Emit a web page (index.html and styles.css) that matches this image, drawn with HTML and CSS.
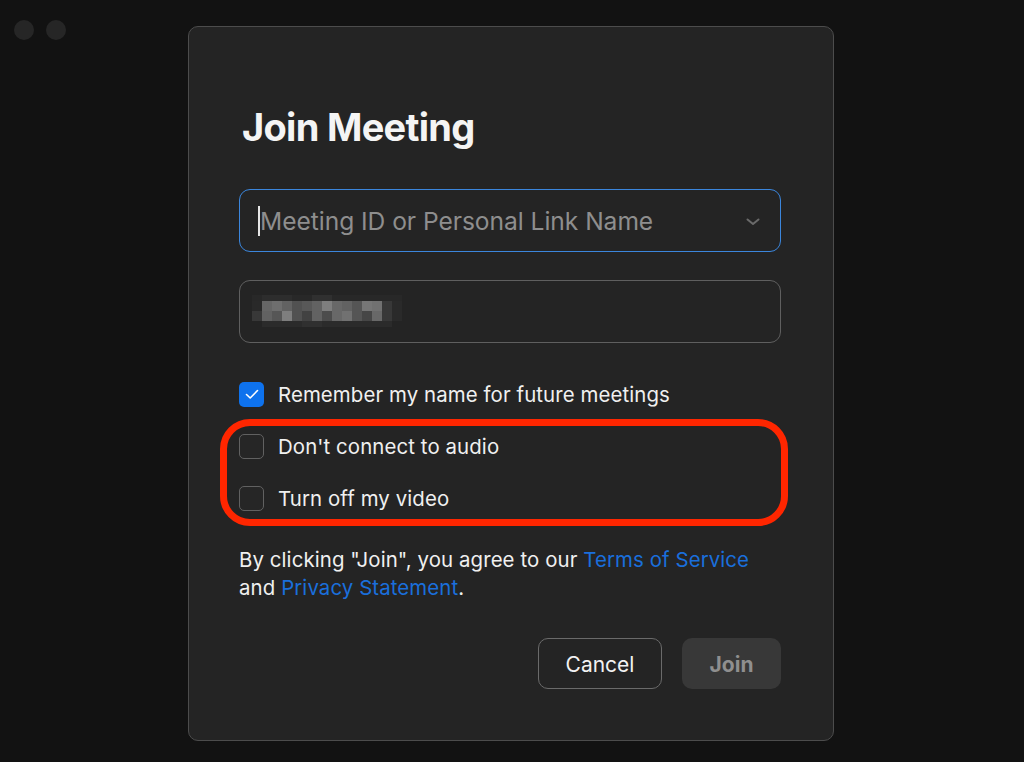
FILE: index.html
```html
<!DOCTYPE html>
<html>
<head>
    <meta charset="utf-8">
    <title>Join Meeting</title>
    <link rel="stylesheet" href="styles.css">
</head>
<body>

<div class="window-dots">
    <span class="dot"></span>
    <span class="dot"></span>
</div>

<div class="dialog">
    <h1 class="title">Join Meeting</h1>

    <div class="field field-focus">
        <span class="caret"></span>
        <span class="placeholder">Meeting ID or Personal Link Name</span>
        <svg class="chevron" width="14" height="8" viewBox="0 0 14 8">
            <path d="M1.5 1.5 L7 6 L12.5 1.5" fill="none" stroke="#6a6a6a" stroke-width="2" stroke-linecap="round" stroke-linejoin="round"/>
        </svg>
    </div>

    <div class="field">
        <!-- pixelated display name -->
        <svg class="blurred" width="160" height="34" viewBox="0 0 160 34">
            <rect x="0" y="0" width="150" height="6" fill="#282828"/>
            <rect x="10" y="0" width="30" height="6" fill="#2d2d2d"/>
            <rect x="60" y="0" width="20" height="6" fill="#303030"/>
            <rect x="0" y="6" width="10" height="10" fill="#292929"/>
            <rect x="10" y="6" width="10" height="10" fill="#666666"/>
            <rect x="20" y="6" width="10" height="10" fill="#6e6e6e"/>
            <rect x="30" y="6" width="10" height="10" fill="#626262"/>
            <rect x="40" y="6" width="10" height="10" fill="#515151"/>
            <rect x="50" y="6" width="10" height="10" fill="#585858"/>
            <rect x="60" y="6" width="10" height="10" fill="#626262"/>
            <rect x="70" y="6" width="10" height="10" fill="#7e7e7e"/>
            <rect x="80" y="6" width="10" height="10" fill="#686868"/>
            <rect x="90" y="6" width="10" height="10" fill="#626262"/>
            <rect x="100" y="6" width="10" height="10" fill="#555555"/>
            <rect x="110" y="6" width="10" height="10" fill="#767676"/>
            <rect x="120" y="6" width="10" height="10" fill="#717171"/>
            <rect x="130" y="6" width="10" height="10" fill="#383838"/>
            <rect x="140" y="6" width="10" height="10" fill="#2a2a2a"/>
            <rect x="0" y="16" width="10" height="10" fill="#383838"/>
            <rect x="10" y="16" width="10" height="10" fill="#626262"/>
            <rect x="20" y="16" width="10" height="10" fill="#565656"/>
            <rect x="30" y="16" width="10" height="10" fill="#7e7e7e"/>
            <rect x="40" y="16" width="10" height="10" fill="#515151"/>
            <rect x="50" y="16" width="10" height="10" fill="#424242"/>
            <rect x="60" y="16" width="10" height="10" fill="#626262"/>
            <rect x="70" y="16" width="10" height="10" fill="#4c4c4c"/>
            <rect x="80" y="16" width="10" height="10" fill="#686868"/>
            <rect x="90" y="16" width="10" height="10" fill="#717171"/>
            <rect x="100" y="16" width="10" height="10" fill="#555555"/>
            <rect x="110" y="16" width="10" height="10" fill="#464646"/>
            <rect x="120" y="16" width="10" height="10" fill="#686868"/>
            <rect x="130" y="16" width="10" height="10" fill="#383838"/>
            <rect x="140" y="16" width="10" height="10" fill="#2a2a2a"/>
            <rect x="10" y="26" width="130" height="6" fill="#2b2b2b"/>
            <rect x="50" y="26" width="20" height="6" fill="#303030"/>
        </svg>
    </div>

    <div class="options">
        <label class="option">
            <span class="box box-checked">
                <svg width="14" height="11" viewBox="0 0 14 11">
                    <path d="M1.5 5.5 L5.2 9 L12.5 1.5" fill="none" stroke="#fff" stroke-width="1.6" stroke-linecap="round" stroke-linejoin="round"/>
                </svg>
            </span>
            Remember my name for future meetings
        </label>
        <div class="option-group">
            <label class="option">
                <span class="box"></span>
                Don't connect to audio
            </label>
            <label class="option">
                <span class="box"></span>
                Turn off my video
            </label>
            <div class="highlight"></div>
        </div>
    </div>

    <p class="terms">
        By clicking "Join", you agree to our <a href="#">Terms of Service</a><br>
        and <a href="#">Privacy Statement</a>.
    </p>

    <div class="actions">
        <button class="btn btn-cancel">Cancel</button>
        <button class="btn btn-join">Join</button>
    </div>
</div>

</body>
</html>
```

FILE: styles.css
```css
BODY {
    margin: 0;
    width: 1024px;
    height: 762px;
    background: #121212;
    font-family: Inter, "Noto Sans", sans-serif;
    color: #f2f2f2;
    position: relative;
    overflow: hidden;
}

.window-dots {
    display: flex;
    gap: 12px;
    padding: 20px 0 0 14px;
}
.dot {
    width: 20px;
    height: 20px;
    border-radius: 50%;
    background: #262626;
}

.dialog {
    position: absolute;
    left: 188px;
    top: 26px;
    width: 646px;
    height: 715px;
    background: #242424;
    border: 1px solid #4c4c4c;
    border-radius: 10px;
    box-sizing: border-box;
    padding: 0 52px 0 50px;
}

.title {
    margin: 77px 0 0 3px;
    font-size: 38px;
    font-weight: 700;
    line-height: 46px;
    letter-spacing: -0.7px;
    color: #f4f4f4;
}

.field {
    height: 63px;
    margin-top: 39px;
    border: 1px solid #5f5f5f;
    border-radius: 11px;
    box-sizing: border-box;
    display: flex;
    align-items: center;
    padding: 0 20px 0 18px;
    position: relative;
}
.field + .field {
    margin-top: 28px;
    padding-left: 12px;
    padding-top: 1px;
}
.field-focus {
    border: 1.5px solid #3b86dc;
}
.caret {
    width: 2px;
    height: 30px;
    background: #e6e6e6;
}
.placeholder {
    flex: 1;
    font-size: 24.6px;
    color: #8e8e8e;
    letter-spacing: -0.05px;
}
.chevron {
    margin-top: 2px;
}

.options {
    margin-top: 38px;
}
.option {
    display: flex;
    align-items: center;
    gap: 14px;
    height: 26px;
    font-size: 20.4px;
    color: #f0f0f0;
    letter-spacing: 0.1px;
}
.option-group {
    position: relative;
    margin-top: 26px;
    display: flex;
    flex-direction: column;
    gap: 26px;
}
.box {
    width: 25px;
    height: 25px;
    border: 1px solid #616161;
    border-radius: 5px;
    box-sizing: border-box;
    display: flex;
    align-items: center;
    justify-content: center;
    background: #262626;
}
.box-checked {
    border: none;
    background: #0e72ed;
}

.highlight {
    position: absolute;
    left: -19px;
    top: -14px;
    width: 568px;
    height: 107px;
    border: 7px solid #ff2600;
    border-radius: 30px;
    box-sizing: border-box;
}

.terms {
    margin: 35px 0 0 0;
    font-size: 20.4px;
    line-height: 28px;
    color: #f0f0f0;
    letter-spacing: 0.1px;
}
.terms A {
    color: #1a6fdc;
    text-decoration: none;
}

.actions {
    display: flex;
    justify-content: flex-end;
    gap: 20px;
    margin-top: 36px;
}
.btn {
    height: 51px;
    padding-top: 3px;
    border-radius: 10px;
    font-family: Inter, "Noto Sans", sans-serif;
    font-size: 21px;
    box-sizing: border-box;
}
.btn-cancel {
    width: 124px;
    background: #242424;
    border: 1px solid #6a6a6a;
    color: #f2f2f2;
}
.btn-join {
    width: 99px;
    background: #383838;
    border: none;
    color: #8f8f8f;
    font-weight: 700;
}
```
